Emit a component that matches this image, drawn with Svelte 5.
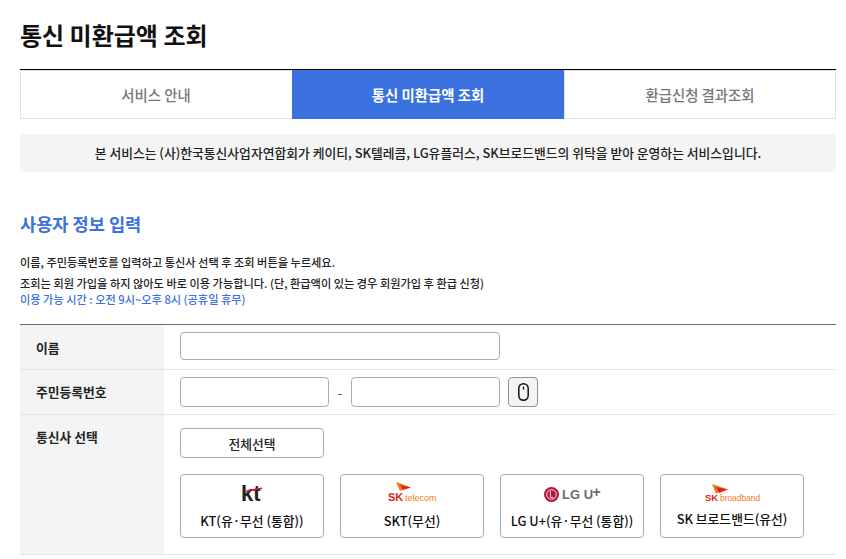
<script>
  const tabs = [
    { label: '서비스 안내', active: false },
    { label: '통신 미환급액 조회', active: true },
    { label: '환급신청 결과조회', active: false },
  ]

  const carriers = [
    { id: 'kt', label: 'KT(유·무선 (통합))' },
    { id: 'skt', label: 'SKT(무선)' },
    { id: 'lg', label: 'LG U+(유·무선 (통합))' },
    { id: 'skb', label: 'SK 브로드밴드(유선)' },
  ]
</script>

<main class="Page">
  <h1 class="Title">통신 미환급액 조회</h1>

  <nav class="Tabs">
    {#each tabs as tab}
      <div class="Tab" class:active={tab.active}>{tab.label}</div>
    {/each}
  </nav>

  <p class="Notice">
    본 서비스는 (사)한국통신사업자연합회가 케이티, SK텔레콤, LG유플러스, SK브로드밴드의 위탁을 받아 운영하는 서비스입니다.
  </p>

  <h2 class="Heading">사용자 정보 입력</h2>

  <div class="Guide">
    <p>이름, 주민등록번호를 입력하고 통신사 선택 후 조회 버튼을 누르세요.</p>
    <p class="line2">조회는 회원 가입을 하지 않아도 바로 이용 가능합니다. (단, 환급액이 있는 경우 회원가입 후 환급 신청)</p>
    <p class="line3">이용 가능 시간 : 오전 9시~오후 8시 (공휴일 휴무)</p>
  </div>

  <section class="Form">
    <div class="Row">
      <div class="Label first">이름</div>
      <div class="Field name">
        <input class="Input wide" type="text" />
      </div>
    </div>

    <div class="Row">
      <div class="Label">주민등록번호</div>
      <div class="Field">
        <input class="Input half" type="text" />
        <span class="Dash">-</span>
        <input class="Input half" type="text" />
        <button class="Mouse" aria-label="보안 키패드">
          <svg width="11" height="18" viewBox="0 0 11 18" fill="none">
            <rect x="0.8" y="0.8" width="9.4" height="16.4" rx="4.6" stroke="#111" stroke-width="1.5" />
            <path d="M5.5 3.6v3" stroke="#111" stroke-width="1.3" />
          </svg>
        </button>
      </div>
    </div>

    <div class="Row">
      <div class="Label">통신사 선택</div>
      <div class="Field carrier">
        <button class="AllBtn">전체선택</button>
        <div class="Carriers">
          {#each carriers as c}
            <button class="Card {c.id}">
              <span class="Logo">
                <svg width="100" height="30" viewBox="0 0 100 30">
                  {#if c.id === 'kt'}
                    <text x="39" y="26" class="ktText">kt</text>
                    <path d="M44 16.2 60 13.2" stroke="#e2132b" stroke-width="1.6" />
                  {:else if c.id === 'skt'}
                    <path d="M34 7 40 9 49 12.5 43 13.5 38 16Z" fill="#f47a20" />
                    <path d="M38 10 49 12.5 41 15Z" fill="#e2231a" />
                    <text x="26" y="26" class="skText">SK</text>
                    <text x="43" y="26" class="subText">telecom</text>
                  {:else if c.id === 'lg'}
                    <circle cx="29.5" cy="19.5" r="7.5" fill="#b5123e" />
                    <circle cx="29.5" cy="19.5" r="4.8" fill="none" stroke="#fff" stroke-width="0.9" />
                    <path d="M28.4 16v6.4h2.8" stroke="#fff" stroke-width="0.9" fill="none" />
                    <text x="40" y="24" class="lgText">LG U</text>
                    <text x="70.5" y="21.5" class="lgText plus">+</text>
                  {:else}
                    <path d="M30 9 36 11 46 14.5 39 15.5 34 19Z" fill="#f47a20" />
                    <path d="M34 12 46 14.5 37 18Z" fill="#e2231a" />
                    <text x="23" y="26" class="skText small">SK</text>
                    <text x="38" y="26" class="subText broad">broadband</text>
                  {/if}
                </svg>
              </span>
              <span class="CardLabel">{c.label}</span>
            </button>
          {/each}
        </div>
      </div>
    </div>
  </section>
</main>

<style>
  :global(body) {
    margin: 0;
    background: #fff;
  }

  .Page {
    box-sizing: border-box;
    width: 846px;
    height: 559px;
    overflow: hidden;
    padding: 0 10px 0 20px;
    font-family: "Noto Sans CJK KR", "Noto Sans", sans-serif;
    color: #111;
  }

  p,
  h1,
  h2 {
    margin: 0;
  }

  .Title {
    height: 69px;
    font-size: 24px;
    line-height: 69px;
    font-weight: 700;
  }

  .Tabs {
    display: flex;
    border-top: 1px solid #000;
    height: 49px;
  }

  .Tab {
    flex: 1 1 0;
    display: flex;
    align-items: center;
    justify-content: center;
    box-sizing: border-box;
    border: 1px solid #dde1ea;
    font-size: 14.4px;
    font-weight: 500;
    color: #777;
  }

  .Tab:first-child {
    border-right-color: transparent;
  }

  .Tab.active {
    background: #3a71df;
    border-color: #3a71df;
    color: #fff;
    font-weight: 700;
  }

  .Notice {
    margin-top: 15px;
    height: 38px;
    line-height: 38px;
    border-radius: 4px;
    background: #f4f4f4;
    text-align: center;
    font-size: 12.8px;
    font-weight: 500;
    color: #222;
    white-space: nowrap;
  }

  .Heading {
    margin-top: 38px;
    height: 28px;
    line-height: 28px;
    font-size: 17.6px;
    font-weight: 700;
    color: #3a71df;
  }

  .Guide {
    margin-top: 16px;
    font-size: 11.2px;
    font-weight: 500;
    color: #222;
    white-space: nowrap;
  }

  .Guide p {
    height: 16px;
    line-height: 16px;
  }

  .Guide .line2 {
    margin-top: 5px;
  }

  .Guide .line3 {
    color: #3a71df;
  }

  .Form {
    margin-top: 17px;
    border-top: 1px solid #666c75;
  }

  .Row {
    display: flex;
    border-bottom: 1px solid #e3e5e8;
  }

  .Label {
    flex: 0 0 144px;
    box-sizing: border-box;
    padding: 13px 0 0 16px;
    background: #f4f4f4;
    font-size: 12.8px;
    line-height: 17px;
    font-weight: 700;
    color: #222;
  }

  .Label.first {
    padding-top: 14px;
  }

  .Field {
    flex: 1;
    display: flex;
    align-items: center;
    padding: 7px 16px;
    height: 30px;
  }

  .Field.name {
    padding-bottom: 9px;
    height: 28px;
  }

  .Field.carrier {
    height: auto;
    padding: 13px 16px 16px;
    flex-direction: column;
    align-items: flex-start;
  }

  .Input {
    box-sizing: border-box;
    height: 100%;
    margin: 0;
    border: 1px solid #a2aeba;
    border-radius: 4px;
    background: #fff;
  }

  .Input.wide {
    width: 320px;
  }

  .Input.half {
    width: 149px;
  }

  .Dash {
    width: 22px;
    text-align: center;
    font-size: 12.8px;
    color: #444;
  }

  .Mouse {
    box-sizing: border-box;
    width: 30px;
    height: 30px;
    margin-left: 8px;
    padding: 0;
    display: flex;
    align-items: center;
    justify-content: center;
    background: #f4f4f4;
    border: 1px solid #8b929b;
    border-radius: 4px;
  }

  .AllBtn {
    box-sizing: border-box;
    width: 144px;
    height: 30px;
    padding: 0;
    background: #fff;
    border: 1px solid #a2aeba;
    border-radius: 4px;
    font: 500 12.8px "Noto Sans CJK KR", sans-serif;
    color: #222;
  }

  .Carriers {
    display: flex;
    gap: 16px;
    margin-top: 16px;
  }

  .Card {
    box-sizing: border-box;
    width: 144px;
    height: 64px;
    padding: 0;
    display: flex;
    flex-direction: column;
    align-items: center;
    background: #fff;
    border: 1px solid #a2aeba;
    border-radius: 4px;
    font-family: "Noto Sans CJK KR", sans-serif;
  }

  .Logo {
    display: block;
    height: 36px;
  }

  .Card.skb .Logo {
    height: 34px;
  }

  .Logo svg {
    display: block;
  }

  .CardLabel {
    font-size: 12.8px;
    line-height: 20px;
    font-weight: 500;
    color: #111;
    white-space: nowrap;
  }

  .ktText {
    font: 700 22px "Liberation Sans", sans-serif;
    fill: #222;
  }

  .skText {
    font: 700 11px "Liberation Sans", sans-serif;
    fill: #e2231a;
  }

  .skText.small {
    font-size: 9.5px;
  }

  .subText {
    font: 400 9px "Liberation Sans", sans-serif;
    fill: #f47a20;
  }

  .subText.broad {
    font-size: 8.4px;
  }

  .lgText {
    font: 700 13px "Liberation Sans", sans-serif;
    fill: #6b6b6b;
  }

  .lgText.plus {
    font-size: 14px;
  }
</style>
